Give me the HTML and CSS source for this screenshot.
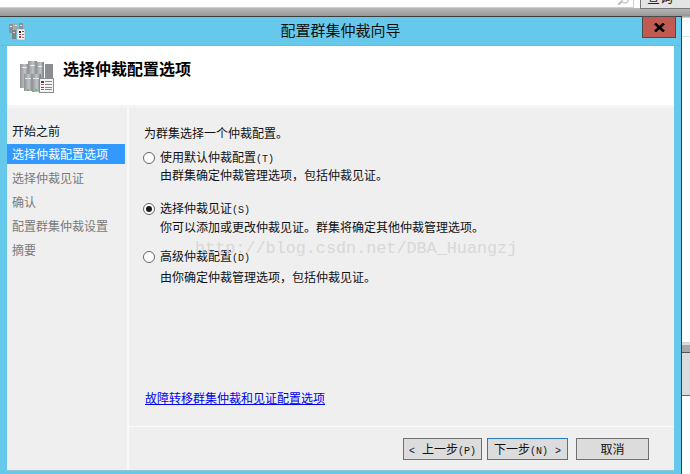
FILE: index.html
```html
<!DOCTYPE html>
<html lang="zh-CN">
<head>
<meta charset="utf-8">
<title>配置群集仲裁向导</title>
<link rel="stylesheet" href="styles.css">
</head>
<body>
<div class="desktop">
  <div class="topstrip">
    <div class="search">
      <svg class="search-icon" width="12" height="5" viewBox="0 0 12 5"><path d="M1 5 L5 1" stroke="#bbb" stroke-width="2"/><circle cx="8" cy="0" r="3" fill="none" stroke="#ccc" stroke-width="1.5"/></svg>
    </div>
    <div class="querybtn"><span class="querytext">查询</span></div>
  </div>
  <div class="topshade"></div>
  <div class="edge-line"></div>
  <div class="edge-scroll"><div class="edge-thumb"></div></div>

  <div class="window">
    <div class="titlebar">
      <svg class="title-icon" width="17" height="17" viewBox="0 0 17 17">
        <rect x="0" y="1" width="4" height="9" fill="#8c9296"/><rect x="5" y="0" width="4" height="8" fill="#a4a9ad"/><rect x="10" y="0" width="4" height="7" fill="#8c9296"/>
        <rect x="3" y="7" width="4" height="9" fill="#7d8488"/><rect x="1" y="3" width="2" height="1" fill="#e4e6e8"/><rect x="6" y="2" width="2" height="1" fill="#e4e6e8"/><rect x="11" y="2" width="2" height="1" fill="#e4e6e8"/><rect x="4" y="9" width="2" height="1" fill="#d8dadc"/>
        <rect x="8" y="6" width="8" height="11" fill="#f4f4f4" stroke="#9a9a9a" stroke-width=".6"/>
        <rect x="10" y="8" width="2" height="2" fill="#222"/><rect x="13" y="8" width="2" height="1" fill="#555"/><rect x="10" y="11" width="2" height="1" fill="#c33"/><rect x="13" y="11" width="2" height="1" fill="#777"/><rect x="10" y="13" width="2" height="2" fill="#c33"/><rect x="13" y="14" width="2" height="1" fill="#777"/>
      </svg>
      <span class="title-text">配置群集仲裁向导</span>
      <div class="close"><svg width="11" height="9" viewBox="0 0 11 9"><path d="M1 0.5 L10 8.5 M10 0.5 L1 8.5" stroke="#000" stroke-width="2.6"/></svg></div>
    </div>
    <div class="client">
      <header class="header">
        <svg class="header-icon" width="34" height="32" viewBox="0 0 34 32">
          <defs>
            <linearGradient id="srv" x1="0" y1="0" x2="1" y2="0"><stop offset="0" stop-color="#8f9397"/><stop offset=".55" stop-color="#c2c5c8"/><stop offset="1" stop-color="#777b80"/></linearGradient>
          </defs>
          <rect x="0" y="3" width="9" height="24" fill="url(#srv)"/>
          <rect x="8" y="0" width="9" height="20" fill="url(#srv)"/>
          <rect x="16" y="1" width="8" height="20" fill="url(#srv)"/>
          <rect x="25" y="3" width="8" height="20" fill="#8a8e92"/>
          <rect x="4" y="13" width="9" height="17" fill="url(#srv)"/>
          <rect x="12" y="13" width="9" height="18" fill="url(#srv)"/>
          <rect x="2" y="6" width="5" height="1" fill="#e8eaec"/><rect x="10" y="4" width="5" height="1" fill="#e8eaec"/><rect x="18" y="5" width="4" height="1" fill="#e8eaec"/>
          <rect x="5" y="17" width="6" height="1" fill="#e4e6e8"/><rect x="13" y="17" width="6" height="1" fill="#e4e6e8"/>
          <rect x="7" y="28" width="2" height="2" fill="#5cc83c"/><rect x="15" y="28" width="2" height="2" fill="#5cc83c"/>
          <rect x="19.500" y="17.500" width="14" height="14" fill="#f4f4f4" stroke="#8c8c8c"/>
          <rect x="21" y="20" width="3" height="2" fill="#444"/><rect x="25" y="20" width="7" height="1" fill="#888"/>
          <rect x="21" y="23" width="3" height="1" fill="#b55"/><rect x="25" y="23" width="7" height="1" fill="#888"/>
          <rect x="21" y="26" width="3" height="1" fill="#555"/><rect x="25" y="26" width="7" height="1" fill="#888"/>
          <rect x="21" y="28" width="3" height="1" fill="#b55"/><rect x="25" y="28" width="7" height="1" fill="#888"/>
        </svg>
        <h1 class="heading">选择仲裁配置选项</h1>
      </header>
      <div class="body">
        <nav class="nav">
          <div class="nav-item nav-first">开始之前</div>
          <div class="nav-item nav-active">选择仲裁配置选项</div>
          <div class="nav-item nav-muted">选择仲裁见证</div>
          <div class="nav-item nav-muted">确认</div>
          <div class="nav-item nav-muted">配置群集仲裁设置</div>
          <div class="nav-item nav-muted">摘要</div>
        </nav>
        <main class="panel">
          <div class="content">
            <p class="intro">为群集选择一个仲裁配置。</p>
            <div class="option opt-one">
              <span class="radio"></span>
              <div class="opt-text"><div class="opt-label">使用默认仲裁配置<span class="key">(T)</span></div><div class="opt-desc">由群集确定仲裁管理选项，包括仲裁见证。</div></div>
            </div>
            <div class="option opt-two">
              <span class="radio radio-on"></span>
              <div class="opt-text"><div class="opt-label">选择仲裁见证<span class="key">(S)</span></div><div class="opt-desc">你可以添加或更改仲裁见证。群集将确定其他仲裁管理选项。</div></div>
            </div>
            <div class="option opt-three">
              <span class="radio"></span>
              <div class="opt-text"><div class="opt-label">高级仲裁配置<span class="key">(D)</span></div><div class="opt-desc">由你确定仲裁管理选项，包括仲裁见证。</div></div>
            </div>
            <a class="link" href="#">故障转移群集仲裁和见证配置选项</a>
          </div>
          <footer class="footer">
            <button class="btn btn-prev"><span class="key">&lt;</span> 上一步<span class="key">(P)</span></button>
            <button class="btn btn-next">下一步<span class="key">(N)</span> <span class="key">&gt;</span></button>
            <button class="btn btn-cancel">取消</button>
          </footer>
        </main>
      </div>
    </div>
    <div class="watermark">http://blog.csdn.net/DBA_Huangzj</div>
  </div>
</div>
</body>
</html>
```
FILE: styles.css
```css
* { box-sizing: border-box; }
html, body { margin: 0; padding: 0; }
body {
  width: 690px;
  height: 474px;
  overflow: hidden;
  background: #fff;
  font-family: "Liberation Mono", "Noto Sans CJK SC", monospace;
  font-size: 12px;
  color: #111;
}
.desktop { position: relative; width: 690px; height: 474px; overflow: hidden; background: #fff; }

.topstrip { height: 8px; display: flex; background: #fff; }
.search {
  width: 634px;
  height: 8px;
  background: #fff;
  border-bottom: 1px solid #cfcfcf;
  border-right: 1px solid #cfcfcf;
  position: relative;
}
.search-icon { position: absolute; left: 617px; top: 0; }
.querybtn {
  margin-left: 6px;
  flex: 1;
  height: 9px;
  background: #e4e4e4;
  border-left: 1px solid #777;
  border-bottom: 1px solid #777;
  overflow: hidden;
  position: relative;
}
.querytext { position: absolute; left: 6px; top: -9px; font-size: 13px; line-height: 15px; color: #222; }
.topshade { height: 10px; background: linear-gradient(#b8b8b8, #989898 80%, #d8d8d8); }
.edge-line { position: absolute; left: 682px; top: 36px; width: 8px; height: 1px; background: #e2e2e2; }
.edge-scroll {
  position: absolute;
  left: 682px;
  top: 342px;
  width: 8px;
  height: 54px;
  background: #dcdcdc;
  border-bottom: 1px solid #666;
  border-top: 1px solid #d0d0d0;
}
.edge-thumb { height: 8px; margin-top: 2px; background: #a8a8a8; border-bottom: 1px solid #555; }

.window {
  position: absolute;
  left: 0;
  top: 16px;
  width: 682px;
  height: 458px;
  background: #66c9eb;
  border-top: 1px solid #3c3c3c;
  border-right: 1px solid #3c3c3c;
  display: flex;
  flex-direction: column;
}
.titlebar {
  height: 29px;
  flex: none;
  display: flex;
  align-items: center;
  justify-content: center;
  position: relative;
  border-bottom: 1px solid #7fb3cc;
}
.title-icon { position: absolute; left: 9px; top: 6px; }
.title-text { font-size: 15px; line-height: 24px; height: 20px; color: #111; }
.close {
  position: absolute;
  left: 642px;
  top: -1px;
  width: 34px;
  height: 22px;
  background: #c15b52;
  border: 1px solid #4c4c4c;
  display: flex;
  align-items: center;
  justify-content: center;
}

.client {
  margin: 0 7px 4px;
  flex: 1;
  min-height: 0;
  display: flex;
  flex-direction: column;
  background: #f5f5f5;
  box-shadow: 0 1px 0 #8fc4da;
}
.header {
  height: 59px;
  flex: none;
  background: #fff;
  display: flex;
  align-items: flex-start;
  padding: 15px 0 0 13px;
}
.header-icon { flex: none; }
.heading {
  margin: 0 0 0 9px;
  font-size: 16px;
  line-height: 20px;
  font-weight: 700;
  color: #000;
}
.body { flex: 1; min-height: 0; display: flex; margin-top: 3px; gap: 2px; background: #fafafa; }
.nav {
  width: 120px;
  flex: none;
  background: #efefef;
  padding: 13px 2px 0 0;
  display: flex;
  flex-direction: column;
  gap: 4px;
}
.nav-item { height: 20px; line-height: 24px; padding-left: 5px; font-size: 12px; white-space: nowrap; }
.nav-first { height: 19px; }
.nav-active { background: #3399ff; color: #fff; }
.nav-muted { color: #7a7a7a; }

.panel { flex: 1; min-width: 0; display: flex; flex-direction: column; background: #efefef; }
.content { flex: 1; min-height: 0; padding: 19px 0 0 15px; display: flex; flex-direction: column; align-items: flex-start; }
.intro { margin: 0; font-size: 12px; line-height: 16px; color: #111; }
.option { display: flex; align-items: flex-start; gap: 5px; margin-left: -1px; }
.opt-one { margin-top: 7px; }
.opt-two { margin-top: 15px; }
.opt-three { margin-top: 11px; }
.opt-two .opt-desc { margin-top: 1px; }
.opt-three .opt-desc { margin-top: 3px; }
.radio {
  width: 12px;
  height: 12px;
  flex: none;
  margin-top: 2px;
  border-radius: 50%;
  background: #fff;
  border: 1px solid #666;
  display: flex;
  align-items: center;
  justify-content: center;
}
.radio-on::after { content: ""; width: 6px; height: 6px; border-radius: 50%; background: #1a1a1a; }
.opt-label { line-height: 18px; height: 18px; font-size: 12px; white-space: nowrap; }
.opt-desc { line-height: 18px; height: 18px; font-size: 12px; white-space: nowrap; }
.key { font-size: 10px; }
.link {
  margin: 104px 0 0 1px;
  font-size: 12px;
  line-height: 16px;
  color: #0000ee;
  text-decoration: underline;
}
.footer {
  height: 44px;
  flex: none;
  border-top: 1px solid #fbfbfb;
  display: flex;
  align-items: flex-start;
  padding: 11px 0 0 274px;
}
.btn {
  height: 22px;
  padding: 0;
  border: 1px solid #707070;
  background: #dcdcdc;
  font-family: inherit;
  font-size: 12px;
  color: #111;
  white-space: pre;
}
.btn-prev { width: 79px; }
.btn-next { width: 81px; margin-left: 5px; border-color: #2f7db8; }
.btn-cancel { width: 73px; margin-left: 8px; }

.watermark {
  position: absolute;
  left: 195px;
  top: 222px;
  font-family: "Liberation Mono", monospace;
  font-size: 16.8px;
  line-height: 20px;
  color: #d8d8d8;
  white-space: nowrap;
}
```
